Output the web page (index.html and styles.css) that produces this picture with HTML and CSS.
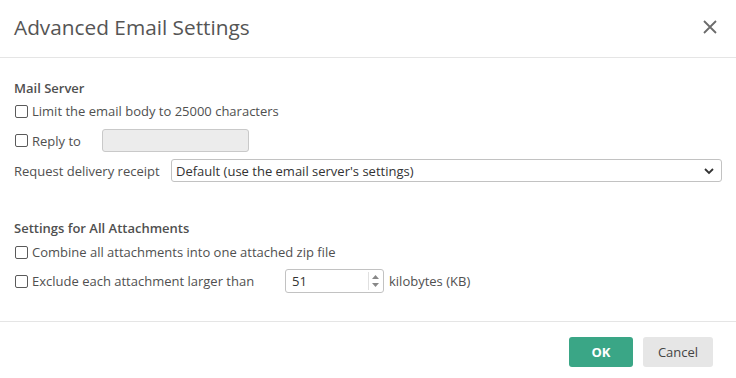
FILE: index.html
```html
<!DOCTYPE html>
<html lang="en">
<head>
<meta charset="utf-8">
<title>Advanced Email Settings</title>
<link rel="stylesheet" href="styles.css">
</head>
<body>
<div class="dialog">
  <header class="dlg-header">
    <h1 class="dlg-title">Advanced Email Settings</h1>
    <button class="close-btn" aria-label="Close">
      <svg width="16" height="16" viewBox="0 0 16 16"><path d="M2 2 L14 14 M14 2 L2 14" stroke="#6b6b6b" stroke-width="1.8" fill="none"/></svg>
    </button>
  </header>
  <main class="dlg-body">
    <section class="group">
      <h2 class="group-title">Mail Server</h2>
      <label class="row row-check"><input type="checkbox" class="cb"><span>Limit the email body to 25000 characters</span></label>
      <div class="row row-reply">
        <label class="check-label reply-label"><input type="checkbox" class="cb"><span>Reply to</span></label>
        <input type="text" class="text-input reply-input" disabled>
      </div>
      <div class="row row-select">
        <span class="plain-label">Request delivery receipt</span>
        <div class="select">
          <span>Default (use the email server's settings)</span>
          <svg width="10" height="8" viewBox="0 0 10 8"><path d="M1 2 L5 6 L9 2" stroke="#333" stroke-width="1.8" fill="none"/></svg>
        </div>
      </div>
    </section>
    <section class="group group-attach">
      <h2 class="group-title">Settings for All Attachments</h2>
      <label class="row row-check"><input type="checkbox" class="cb"><span>Combine all attachments into one attached zip file</span></label>
      <div class="row row-number">
        <label class="check-label exclude-label"><input type="checkbox" class="cb"><span>Exclude each attachment larger than</span></label>
        <div class="number">
          <span class="num-val">51</span>
          <span class="spin">
            <svg width="9" height="18" viewBox="0 0 9 18"><path d="M1 7 L4.5 3 L8 7 Z" fill="#888"/><path d="M1 11 L4.5 15 L8 11 Z" fill="#888"/></svg>
          </span>
        </div>
        <span class="unit">kilobytes (KB)</span>
      </div>
    </section>
  </main>
  <footer class="dlg-footer">
    <button class="btn btn-ok">OK</button>
    <button class="btn btn-cancel">Cancel</button>
  </footer>
</div>
</body>
</html>
```

FILE: styles.css
```css
* { box-sizing: border-box; }
html, body { margin: 0; padding: 0; background: #fff; }
body {
  font-family: "Open Sans", "Noto Sans", sans-serif;
  font-size: 13px;
  color: #505050;
  width: 736px;
  height: 378px;
  overflow: hidden;
}
.dialog { width: 736px; }
.dlg-header {
  height: 58px;
  border-bottom: 1px solid #e5e5e5;
  display: flex;
  align-items: center;
  justify-content: space-between;
  padding: 0 18px 4px 14px;
}
.dlg-title {
  margin: 0;
  font-size: 20.8px;
  font-weight: 400;
  color: #555;
}
.close-btn {
  border: 0;
  background: none;
  padding: 0;
  width: 16px;
  height: 16px;
  display: flex;
}
.dlg-body { padding: 21px 14px 0 14px; height: 264px; border-bottom: 1px solid #e5e5e5; }
.group-title {
  margin: 0;
  font-size: 13px;
  font-weight: 600;
  line-height: 18px;
  color: #505050;
}
.row { display: flex; align-items: center; }
.row-check { height: 22px; margin-top: 3px; }
.group-attach .row-check { margin-top: 4px; }
.cb {
  appearance: none;
  -webkit-appearance: none;
  width: 13px;
  height: 13px;
  margin: 0 4px 0 1px;
  border: 1px solid #5a5a5a;
  border-radius: 2px;
  background: #fff;
  flex: none;
}
.check-label { display: flex; align-items: center; }
.row-reply { height: 23px; margin-top: 7px; }
.reply-label { width: 88px; }
.text-input {
  width: 147px;
  height: 23px;
  border: 1px solid #c9c9c9;
  border-radius: 3px;
  background: #ececec;
  margin: 0;
}
.row-select { height: 23px; margin-top: 7px; }
.plain-label { width: 157px; flex: none; }
.select {
  flex: 1;
  height: 23px;
  border: 1px solid #c2c2c2;
  border-radius: 3px;
  display: flex;
  align-items: center;
  justify-content: space-between;
  padding: 0 7px 0 4px;
  color: #333;
}
.group-attach { margin-top: 37px; }
.row-number { height: 24px; margin-top: 6px; }
.exclude-label { width: 271px; }
.number {
  width: 99px;
  height: 24px;
  border: 1px solid #c2c2c2;
  border-radius: 3px;
  display: flex;
  align-items: center;
  justify-content: space-between;
  padding: 0 1px 0 6px;
  color: #333;
}
.spin { display: flex; border-left: 1px solid #e0e0e0; padding: 0 2px; }
.unit { margin-left: 5px; }
.dlg-footer {
  display: flex;
  justify-content: flex-end;
  gap: 10px;
  padding: 15px 23px 0 0;
}
.btn {
  height: 30px;
  border: 0;
  border-radius: 3px;
  font-family: inherit;
  font-size: 13px;
  padding: 0;
}
.btn-ok { width: 64px; background: #3aa686; color: #fff; font-weight: 700; }
.btn-cancel { width: 70px; background: #e6e6e6; color: #444; }
```
